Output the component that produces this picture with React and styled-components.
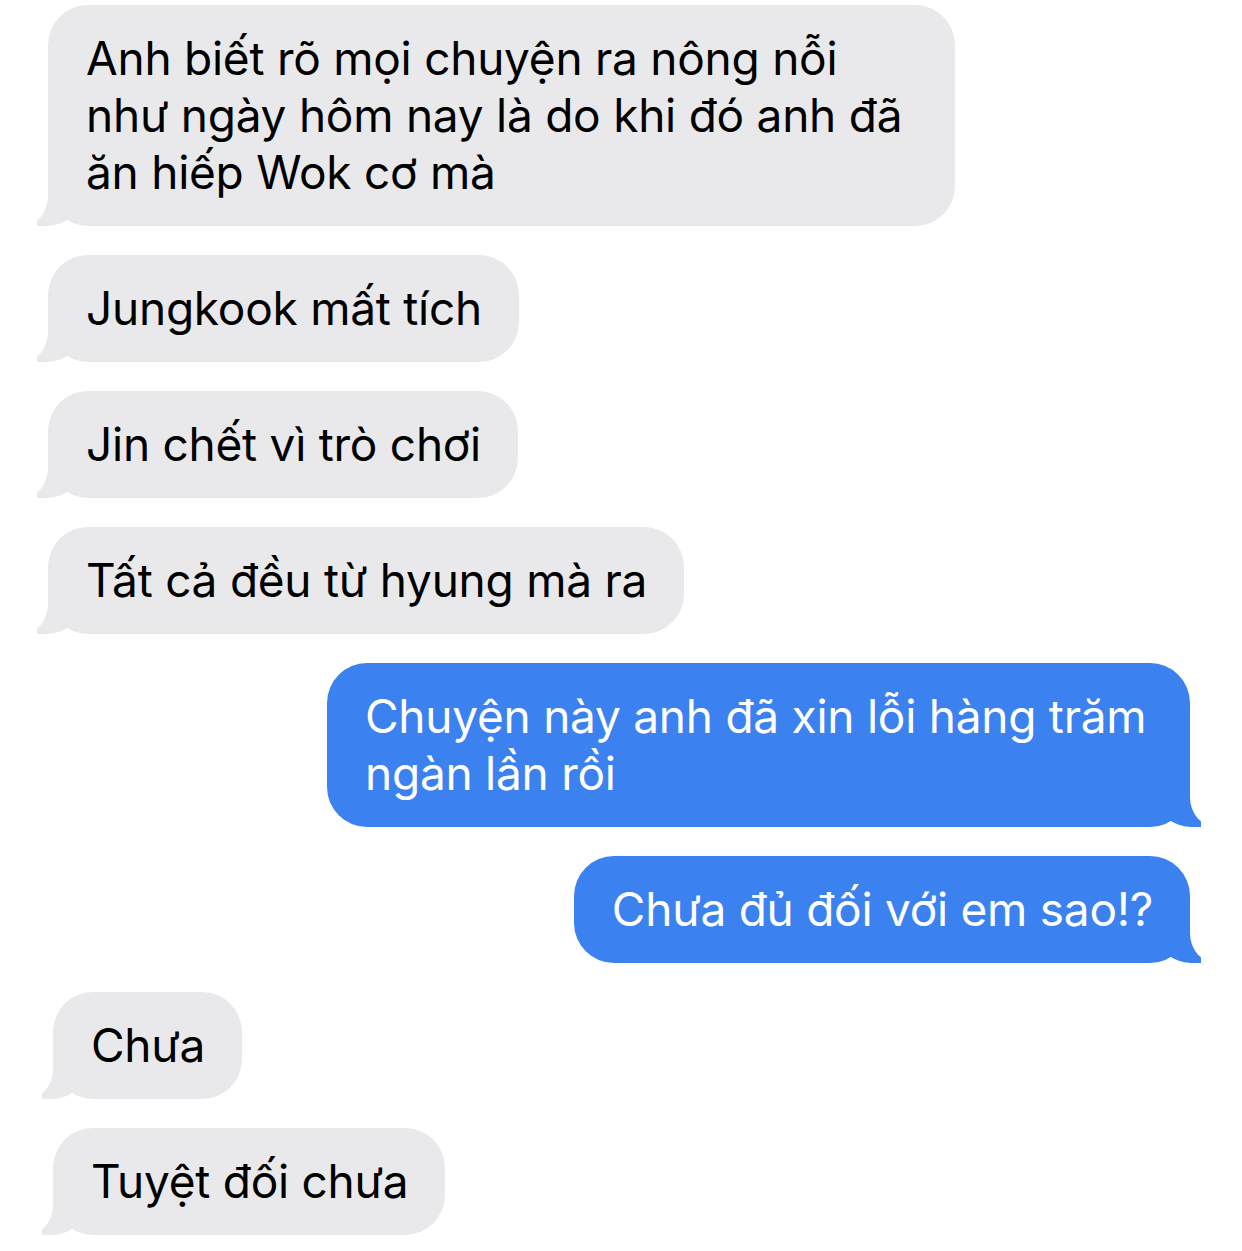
import React from 'react';
import styled, { createGlobalStyle } from 'styled-components';

const GlobalStyle = createGlobalStyle`
  html, body {
    margin: 0;
    padding: 0;
    background: #ffffff;
  }
  body {
    font-family: Inter, "Noto Sans", "Liberation Sans", sans-serif;
    -webkit-font-smoothing: antialiased;
  }
`;

const Thread = styled.div`
  width: 1242px;
  height: 1251px;
  box-sizing: border-box;
  padding: 5px 52px 0 48px;
  display: flex;
  flex-direction: column;
  gap: 29px;
  overflow: hidden;
`;

const Bubble = styled.div`
  position: relative;
  box-sizing: border-box;
  width: ${p => (p.$w ? `${p.$w}px` : 'fit-content')};
  padding: 25px 37px 25px 38px;
  border-radius: 40px;
  font-size: 46px;
  line-height: 57px;
  letter-spacing: -0.25px;
  white-space: nowrap;
  background: ${p => (p.$me ? '#3b82f0' : '#e9e9eb')};
  color: ${p => (p.$me ? '#ffffff' : '#000000')};
  align-self: ${p => (p.$me ? 'flex-end' : 'flex-start')};
  margin-left: ${p => p.$indent || 0}px;

  &::before,
  &::after {
    content: '';
    position: absolute;
    bottom: 0;
    height: 56px;
  }

  &::before {
    ${p => (p.$me ? 'right: -11px;' : 'left: -11px;')}
    width: 44px;
    background: ${p => (p.$me ? '#3b82f0' : '#e9e9eb')};
    ${p => (p.$me
      ? 'border-bottom-left-radius: 34px 32px;'
      : 'border-bottom-right-radius: 34px 32px;')}
  }

  &::after {
    ${p => (p.$me ? 'right: -60px;' : 'left: -60px;')}
    width: 60px;
    background: #ffffff;
    ${p => (p.$me
      ? 'border-bottom-left-radius: 26px 30px;'
      : 'border-bottom-right-radius: 26px 30px;')}
  }
`;

const messages = [
  { lines: ['Anh biết rõ mọi chuyện ra nông nỗi', 'như ngày hôm nay là do khi đó anh đã', 'ăn hiếp Wok cơ mà'], w: 907 },
  { lines: ['Jungkook mất tích'] },
  { lines: ['Jin chết vì trò chơi'] },
  { lines: ['Tất cả đều từ hyung mà ra'] },
  { lines: ['Chuyện này anh đã xin lỗi hàng trăm', 'ngàn lần rồi'], me: true, w: 863 },
  { lines: ['Chưa đủ đối với em sao!?'], me: true },
  { lines: ['Chưa'], indent: 5 },
  { lines: ['Tuyệt đối chưa'], indent: 5 },
];

export default function App() {
  return (
    <>
      <GlobalStyle />
      <Thread>
        {messages.map((m, i) => (
          <Bubble key={i} $me={m.me} $w={m.w} $indent={m.indent}>
            {m.lines.map((l, j) => (
              <React.Fragment key={j}>
                {j > 0 && <br />}
                {l}
              </React.Fragment>
            ))}
          </Bubble>
        ))}
      </Thread>
    </>
  );
}
